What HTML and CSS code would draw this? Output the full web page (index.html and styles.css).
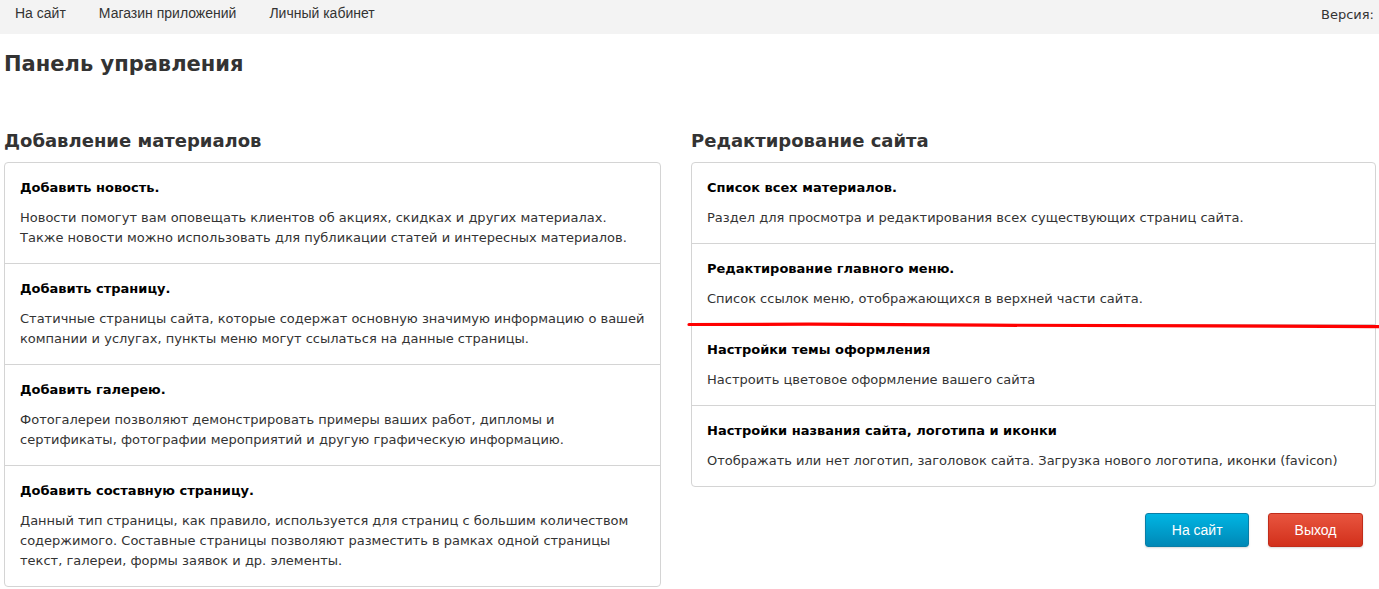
FILE: index.html
```html
<!DOCTYPE html>
<html lang="ru">
<head>
<meta charset="utf-8">
<title>Панель управления</title>
<link rel="stylesheet" href="styles.css">
</head>
<body>
<header class="topbar">
  <nav class="topnav">
    <a class="topnav-link" href="#">На сайт</a>
    <a class="topnav-link" href="#">Магазин приложений</a>
    <a class="topnav-link" href="#">Личный кабинет</a>
  </nav>
  <div class="version">Версия:</div>
</header>
<main class="page">
  <h1 class="page-title">Панель управления</h1>
  <div class="columns">
    <section class="column">
      <h2 class="section-title">Добавление материалов</h2>
      <div class="panel">
        <div class="item">
          <h4 class="item-title">Добавить новость.</h4>
          <p class="item-text">Новости помогут вам оповещать клиентов об акциях, скидках и других материалах.<br>Также новости можно использовать для публикации статей и интересных материалов.</p>
        </div>
        <div class="item">
          <h4 class="item-title">Добавить страницу.</h4>
          <p class="item-text">Статичные страницы сайта, которые содержат основную значимую информацию о вашей компании и услугах, пункты меню могут ссылаться на данные страницы.</p>
        </div>
        <div class="item">
          <h4 class="item-title">Добавить галерею.</h4>
          <p class="item-text">Фотогалереи позволяют демонстрировать примеры ваших работ, дипломы и сертификаты, фотографии мероприятий и другую графическую информацию.</p>
        </div>
        <div class="item">
          <h4 class="item-title">Добавить составную страницу.</h4>
          <p class="item-text">Данный тип страницы, как правило, используется для страниц с большим количеством содержимого. Составные страницы позволяют разместить в рамках одной страницы текст, галереи, формы заявок и др. элементы.</p>
        </div>
      </div>
    </section>
    <section class="column">
      <h2 class="section-title">Редактирование сайта</h2>
      <div class="panel panel-marked">
        <div class="item">
          <h4 class="item-title">Список всех материалов.</h4>
          <p class="item-text">Раздел для просмотра и редактирования всех существующих страниц сайта.</p>
        </div>
        <div class="item">
          <h4 class="item-title">Редактирование главного меню.</h4>
          <p class="item-text">Список ссылок меню, отображающихся в верхней части сайта.</p>
        </div>
        <div class="item">
          <h4 class="item-title">Настройки темы оформления</h4>
          <p class="item-text">Настроить цветовое оформление вашего сайта</p>
        </div>
        <div class="item">
          <h4 class="item-title">Настройки названия сайта, логотипа и иконки</h4>
          <p class="item-text">Отображать или нет логотип, заголовок сайта. Загрузка нового логотипа, иконки (favicon)</p>
        </div>
        <svg class="red-mark" width="692" height="8" viewBox="0 0 692 8" aria-hidden="true">
          <polyline points="0,2.5 120,2.2 300,3.2 520,3.8 692,4.6" fill="none" stroke="#ff0000" stroke-width="3.2" stroke-linecap="round"/>
        </svg>
      </div>
      <div class="actions">
        <a class="btn btn-info" href="#">На сайт</a>
        <a class="btn btn-danger" href="#">Выход</a>
      </div>
    </section>
  </div>
</main>
</body>
</html>
```
FILE: styles.css
```css
* { box-sizing: border-box; }

html, body {
  margin: 0;
  padding: 0;
  background: #fff;
}

body {
  font-family: "DejaVu Sans", sans-serif;
  font-size: 13px;
  color: #333;
  overflow: hidden;
}

.topbar {
  height: 34px;
  background: #f3f3f3;
  display: flex;
  justify-content: space-between;
  align-items: flex-start;
  padding: 0 5px 0 15px;
}

.topnav {
  display: flex;
  gap: 33px;
  padding-top: 3px;
}

.topnav-link {
  font-family: "Liberation Sans", Arial, sans-serif;
  font-size: 14px;
  line-height: 20px;
  color: #333;
  text-decoration: none;
}

.version {
  font-size: 13px;
  line-height: 20px;
  padding-top: 5px;
  color: #333;
}

.page {
  padding: 0 3px 0 4px;
}

.page-title {
  margin: 16px 0 0;
  font-size: 21px;
  line-height: 28px;
  font-weight: bold;
  color: #333;
}

.columns {
  display: grid;
  grid-template-columns: 657px 1fr;
  column-gap: 30px;
  margin-top: 51px;
}

.section-title {
  margin: 0 0 9px;
  font-size: 18px;
  line-height: 24px;
  font-weight: bold;
  color: #333;
}

.panel {
  border: 1px solid #d4d4d4;
  border-radius: 4px;
  background: #fff;
}

.panel-marked {
  position: relative;
}

.item {
  padding: 15px 15px 15px;
  border-top: 1px solid #d4d4d4;
}

.item:first-child {
  border-top: 0;
}

.item-title {
  margin: 0 0 10px;
  font-size: 13px;
  line-height: 20px;
  font-weight: bold;
  color: #000;
}

.item-text {
  margin: 0;
  font-size: 13px;
  line-height: 20px;
  color: #333;
}

.red-mark {
  position: absolute;
  left: -3px;
  top: 159px;
  overflow: visible;
}

.actions {
  display: flex;
  justify-content: flex-end;
  gap: 19px;
  margin-top: 26px;
  padding-right: 13px;
}

.btn {
  display: inline-block;
  font-family: "Liberation Sans", Arial, sans-serif;
  font-size: 14px;
  line-height: 20px;
  color: #fff;
  text-decoration: none;
  padding: 6px 25.5px;
  border: 1px solid;
  border-radius: 3px;
  box-shadow: 0 1px 2px rgba(0, 0, 0, 0.15);
}

.btn-info {
  background: linear-gradient(#00b5e3, #0088b6);
  border-color: #0a7ea6;
}

.btn-danger {
  background: linear-gradient(#e8553f, #d2301b);
  border-color: #c12c1a;
}
```
